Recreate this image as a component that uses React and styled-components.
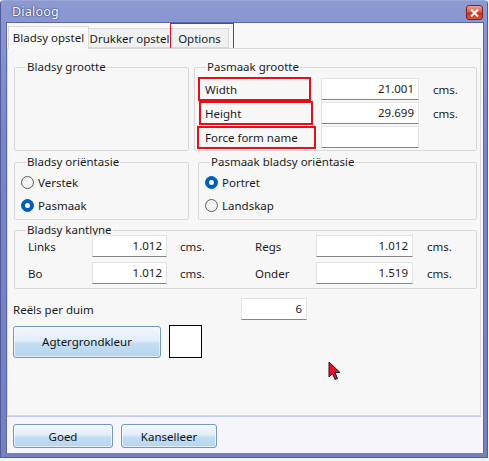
import React from "react";
import styled, { createGlobalStyle } from "styled-components";

const Global = createGlobalStyle`
  html, body {
    margin: 0;
    padding: 0;
    background: #f4f4f4;
  }
  body {
    font-family: "Noto Sans", "Open Sans", sans-serif;
    font-size: 11.5px;
    color: #1b1b1b;
  }
  * {
    box-sizing: border-box;
  }
`;

const Window = styled.div`
  width: 488px;
  height: 458px;
  display: flex;
  flex-direction: column;
  padding: 0 3px 4px 5px;
  background: linear-gradient(#8d99d1, #7986c4 30%, #7481c0);
  border: 1px solid #4f5b9c;
  border-top-color: #9aa5d8;
  border-radius: 4px 4px 0 0;
`;

const TitleBar = styled.div`
  height: 21px;
  display: flex;
  align-items: center;
  justify-content: space-between;
  padding: 0 1px 1px 6px;
`;

const Title = styled.span`
  font-size: 12.5px;
  color: #ffffff;
  text-shadow: 0 0 2px #2c3570, 0 0 1px #2c3570;
  letter-spacing: 0.2px;
`;

const CloseButton = styled.div`
  width: 17px;
  height: 15px;
  margin-top: 3px;
  border: 1px solid #7b2520;
  border-radius: 3px;
  background: linear-gradient(#f0a196, #dd5a4b 45%, #c7321f 55%, #d8553f);
  display: flex;
  align-items: center;
  justify-content: center;
`;

const Client = styled.div`
  flex: 1;
  display: flex;
  flex-direction: column;
  background: #f8f8f8;
  border: 1px solid #5a67a8;
  border-bottom: none;
`;

const TabRow = styled.div`
  display: flex;
  align-items: flex-end;
  padding: 1px 0 0 1px;
  height: 25px;
`;

const Tab = styled.div`
  position: relative;
  width: ${(p) => p.$w}px;
  height: ${(p) => (p.$active ? "23px" : "20px")};
  padding-top: ${(p) => (p.$active ? "2px" : "1px")};
  margin-bottom: ${(p) => (p.$active ? "-1px" : "0")};
  background: ${(p) => (p.$active ? "#fafafa" : "#f0f0f0")};
  border: 1px solid #d9d9d9;
  border-bottom: ${(p) => (p.$active ? "none" : "1px solid #d9d9d9")};
  border-left: ${(p) => (p.$first || p.$active ? "1px solid #d9d9d9" : "none")};
  z-index: ${(p) => (p.$active ? 1 : 0)};
  white-space: nowrap;
  text-align: center;
  line-height: 17px;

  ${(p) =>
    p.$marked &&
    `
    &::after {
      content: "";
      position: absolute;
      left: -1px;
      top: -6px;
      right: -6px;
      bottom: -3px;
      border: 1px solid #e0101c;
    }
  `}
`;

const Panel = styled.div`
  position: relative;
  height: 368px;
  margin: 0 2px 0 0;
  padding: 11px 5px 0 6px;
  background: #f7f7f7;
  border: 1px solid #d9d9d9;
  display: flex;
  flex-direction: column;
`;

const GroupRow = styled.div`
  display: grid;
  grid-template-columns: ${(p) => p.$cols};
  column-gap: ${(p) => p.$gap}px;
  margin-top: ${(p) => p.$top || 0}px;
`;

const Group = styled.fieldset`
  margin: 0;
  padding: ${(p) => p.$pad || "0 6px 2px"};
  border: 1px solid #d8d8d8;
  border-radius: 2px;
  min-width: 0;
`;

const Legend = styled.legend`
  padding: 0 1px;
  margin-left: 5px;
  line-height: 14px;
  color: #1b1b1b;
`;

const SizeGrid = styled.div`
  display: grid;
  grid-template-columns: 125px 98px auto;
  grid-auto-rows: 24px;
  align-items: center;
  padding-top: 3px;
  margin-left: -5px;
`;

const MarkedLabel = styled.div`
  height: ${(p) => p.$h}px;
  width: ${(p) => p.$w}px;
  margin-left: ${(p) => p.$shift}px;
  border: 2px solid #e0101c;
  padding-left: ${(p) => 7 - p.$shift}px;
  display: flex;
  align-items: center;
`;

const Field = styled.div`
  width: ${(p) => p.$w}px;
  height: 22px;
  background: #ffffff;
  border: 1px solid #e2e2e2;
  border-bottom: 1px solid #858585;
  text-align: right;
  padding: 0 4px;
  line-height: 20px;
  color: #1b1b1b;
`;

const Unit = styled.span`
  padding-left: ${(p) => p.$pad}px;
`;

const RadioList = styled.div`
  display: flex;
  flex-direction: column;
  padding-top: 2px;
`;

const RadioItem = styled.label`
  height: 23px;
  display: flex;
  align-items: center;
  gap: 4px;
`;

const RadioDot = styled.span`
  width: 13px;
  height: 13px;
  border-radius: 50%;
  flex-shrink: 0;
  background: ${(p) => (p.$on ? "#005fb8" : "#f3f3f3")};
  border: 1px solid ${(p) => (p.$on ? "#005fb8" : "#5c5c5c")};
  display: flex;
  align-items: center;
  justify-content: center;

  &::after {
    content: "";
    width: 5px;
    height: 5px;
    border-radius: 50%;
    background: #ffffff;
    display: ${(p) => (p.$on ? "block" : "none")};
  }
`;

const MarginGrid = styled.div`
  display: grid;
  grid-template-columns: 64px 75px 88px 61px 97px auto;
  grid-auto-rows: 22px;
  row-gap: 5px;
  align-items: center;
  margin-top: -2px;
  padding: 0 0 4px 7px;
`;

const LineRow = styled.div`
  display: flex;
  align-items: center;
  margin-top: ${(p) => p.$top}px;
`;

const LineLabel = styled.span`
  width: 228px;
  margin-left: -1px;
`;

const AeroButton = styled.button`
  width: ${(p) => p.$w}px;
  height: ${(p) => p.$h}px;
  font-family: inherit;
  font-size: 11.5px;
  color: #111111;
  border: 1px solid #7098c9;
  border-radius: 3px;
  background: linear-gradient(#f3f8fd, #e1eefa 45%, #c4def3 55%, #b4d5f0);
  box-shadow: inset 0 0 0 1px rgba(255, 255, 255, 0.6);
  padding: 0;
  cursor: pointer;
`;

const Swatch = styled.div`
  width: 33px;
  height: 33px;
  background: #ffffff;
  border: 1px solid #000000;
`;

const ButtonRow = styled.div`
  display: flex;
  align-items: center;
  gap: 8px;
  margin-top: ${(p) => p.$top || 0}px;
  margin-left: ${(p) => p.$left || 0}px;
`;

const Cursor = styled.svg`
  position: absolute;
  left: 320px;
  top: 312px;
`;

const Footer = styled.div`
  flex: 1;
  background: #f6f6fa;
  border-top: 1px solid #c6cbe7;
  margin-right: 2px;
  padding: 7px 0 0 6px;
`;

const sizeRows = [
  { label: "Width", value: "21.001", w: 113, h: 24, shift: 2 },
  { label: "Height", value: "29.699", w: 114, h: 24, shift: 3 },
  { label: "Force form name", value: "", w: 119, h: 23, shift: 1 },
];

export default function App() {
  return (
    <>
      <Global />
      <Window>
        <TitleBar>
          <Title>Dialoog</Title>
          <CloseButton>
            <svg width="9" height="8" viewBox="0 0 9 8">
              <path d="M1 0.5 L8 7.5 M8 0.5 L1 7.5" stroke="#ffffff" strokeWidth="2" />
            </svg>
          </CloseButton>
        </TitleBar>
        <Client>
          <TabRow>
            <Tab $active $first $w={81}>Bladsy opstel</Tab>
            <Tab $w={82}>Drukker opstel</Tab>
            <Tab $marked $w={58}>Options</Tab>
          </TabRow>
          <Panel>
            <GroupRow $cols="175px 283px" $gap={5}>
              <Group>
                <Legend>Bladsy grootte</Legend>
              </Group>
              <Group $pad="0 6px 1px">
                <Legend>Pasmaak grootte</Legend>
                <SizeGrid>
                  {sizeRows.map((r) => (
                    <React.Fragment key={r.label}>
                      <MarkedLabel $w={r.w} $h={r.h} $shift={r.shift}>
                        {r.label}
                      </MarkedLabel>
                      <Field $w={98}>{r.value}</Field>
                      <Unit $pad={14}>{r.value ? "cms." : ""}</Unit>
                    </React.Fragment>
                  ))}
                </SizeGrid>
              </Group>
            </GroupRow>

            <GroupRow $cols="175px 279px" $gap={9} $top={4}>
              <Group>
                <Legend>Bladsy oriëntasie</Legend>
                <RadioList>
                  <RadioItem>
                    <RadioDot />
                    Verstek
                  </RadioItem>
                  <RadioItem>
                    <RadioDot $on />
                    Pasmaak
                  </RadioItem>
                </RadioList>
              </Group>
              <Group>
                <Legend>Pasmaak bladsy oriëntasie</Legend>
                <RadioList>
                  <RadioItem>
                    <RadioDot $on />
                    Portret
                  </RadioItem>
                  <RadioItem>
                    <RadioDot />
                    Landskap
                  </RadioItem>
                </RadioList>
              </Group>
            </GroupRow>

            <GroupRow $cols="463px" $gap={0} $top={3}>
              <Group $pad="0 6px 0">
                <Legend>Bladsy kantlyne</Legend>
                <MarginGrid>
                  <span>Links</span>
                  <Field $w={75}>1.012</Field>
                  <Unit $pad={13}>cms.</Unit>
                  <span>Regs</span>
                  <Field $w={97}>1.012</Field>
                  <Unit $pad={14}>cms.</Unit>
                  <span>Bo</span>
                  <Field $w={75}>1.012</Field>
                  <Unit $pad={13}>cms.</Unit>
                  <span>Onder</span>
                  <Field $w={97}>1.519</Field>
                  <Unit $pad={14}>cms.</Unit>
                </MarginGrid>
              </Group>
            </GroupRow>

            <LineRow $top={9}>
              <LineLabel>Reëls per duim</LineLabel>
              <Field $w={66}>6</Field>
            </LineRow>

            <ButtonRow $top={5} $left={-1}>
              <AeroButton $w={148} $h={32}>Agtergrondkleur</AeroButton>
              <Swatch />
            </ButtonRow>

            <Cursor width="14" height="20" viewBox="0 0 14 20">
              <path
                d="M1 1 L1 16 L4.5 12.5 L7 18.5 L9.5 17.5 L7 11.5 L12 11.5 Z"
                fill="#e8102e"
                stroke="#1a1a1a"
                strokeWidth="1"
                strokeLinejoin="round"
              />
            </Cursor>
          </Panel>
          <Footer>
            <ButtonRow>
              <AeroButton $w={100} $h={24}>Goed</AeroButton>
              <AeroButton $w={96} $h={24}>Kanselleer</AeroButton>
            </ButtonRow>
          </Footer>
        </Client>
      </Window>
    </>
  );
}
